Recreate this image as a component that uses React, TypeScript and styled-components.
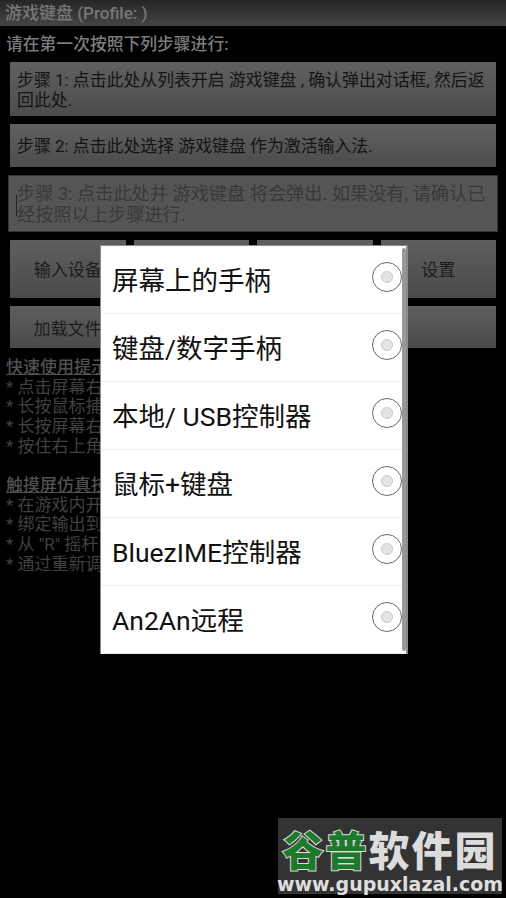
import React from 'react'
import styled, { createGlobalStyle } from 'styled-components'

const cjk = `Roboto, "Noto Sans CJK SC", sans-serif`

const inputOptions = ['屏幕上的手柄', '键盘/数字手柄', '本地/ USB控制器', '鼠标+键盘', 'BluezIME控制器', 'An2An远程']

const quickTips = ['* 点击屏幕右', '* 长按鼠标捕', '* 长按屏幕右', '* 按住右上角']
const touchTips = ['* 在游戏内开', '* 绑定输出到', '* 从 "R" 摇杆', '* 通过重新调']

function App() {
  return (
    <Screen>
      <GlobalStyle />
      <TitleBar>游戏键盘 (Profile: )</TitleBar>
      <Content>
        <Intro>请在第一次按照下列步骤进行:</Intro>
        <StepButton>步骤 1: 点击此处从列表开启 游戏键盘 , 确认弹出对话框, 然后返回此处.</StepButton>
        <StepButton $center>步骤 2: 点击此处选择 游戏键盘 作为激活输入法.</StepButton>
        <DisabledStep>
          <Caret />
          步骤 3: 点击此处并 游戏键盘 将会弹出. 如果没有, 请确认已经按照以上步骤进行.
        </DisabledStep>
        <ActionRow>
          <ActionButton>输入设备</ActionButton>
          <ActionButton />
          <ActionButton />
          <ActionButton>设置</ActionButton>
        </ActionRow>
        <LoadRow>
          <LoadButton>加载文件</LoadButton>
          <LoadButton />
        </LoadRow>
        <Tips>
          <TipsHeading>快速使用提示</TipsHeading>
          {quickTips.map((tip) => (
            <TipLine key={tip}>{tip}</TipLine>
          ))}
          <TipsHeading $spaced>触摸屏仿真技</TipsHeading>
          {touchTips.map((tip, i) => (
            <TipLine key={tip}>
              {tip}
              {i === 0 && <TipEnd>)</TipEnd>}
            </TipLine>
          ))}
        </Tips>
      </Content>

      <Dialog>
        {inputOptions.map((option) => (
          <Option key={option}>
            <OptionLabel>{option}</OptionLabel>
            <Radio>
              <RadioDot />
            </Radio>
          </Option>
        ))}
        <Scrollbar />
      </Dialog>

      <Watermark>
        <LogoTitle>
          <LogoGreen>谷普</LogoGreen>
          <LogoWhite>软件园</LogoWhite>
        </LogoTitle>
        <LogoUrl>www.gupuxlazal.com</LogoUrl>
      </Watermark>
    </Screen>
  )
}

const GlobalStyle = createGlobalStyle`
  html, body {
    margin: 0;
    padding: 0;
    background: #000;
  }
`

const Screen = styled.div`
  position: relative;
  width: 506px;
  height: 898px;
  overflow: hidden;
  background: #000;
  font-family: ${cjk};
`

const TitleBar = styled.div`
  height: 26px;
  line-height: 26px;
  padding-left: 5px;
  font-size: 17px;
  font-weight: 500;
  color: #777;
  background: linear-gradient(#262626, #454545);
`

const Content = styled.div`
  display: flex;
  flex-direction: column;
  padding: 0 10px;
`

const Intro = styled.div`
  height: 36px;
  line-height: 36px;
  margin-left: -4px;
  font-size: 16.8px;
  font-weight: 500;
  color: #7c7c7c;
`

const StepButton = styled.div<{ $center?: boolean }>`
  display: flex;
  align-items: ${({ $center }) => ($center ? 'center' : 'flex-start')};
  box-sizing: border-box;
  height: ${({ $center }) => ($center ? '43px' : '54px')};
  margin-bottom: 8px;
  padding: ${({ $center }) => ($center ? '0 7px' : '8px 7px 0')};
  font-size: 16.9px;
  line-height: 20px;
  color: #141414;
  background: linear-gradient(#606060, #4c4c4c);
`

const DisabledStep = styled.div`
  position: relative;
  box-sizing: border-box;
  height: 57px;
  margin: 0 -2px 8px;
  padding: 7px 8px 0;
  font-size: 18.2px;
  line-height: 21px;
  color: #393939;
  background: #555;
  border: 1px solid #333;
`

const Caret = styled.div`
  position: absolute;
  left: 7px;
  top: 19px;
  width: 1px;
  height: 21px;
  background: #222;
`

const ActionRow = styled.div`
  display: grid;
  grid-template-columns: repeat(4, 1fr);
  column-gap: 8px;
  height: 58px;
  margin-bottom: 8px;
`

const ActionButton = styled.div`
  display: flex;
  align-items: center;
  justify-content: center;
  padding-bottom: 2px;
  font-size: 17px;
  color: #1c1c1c;
  background: linear-gradient(#5e5e5e, #4a4a4a);
`

const LoadRow = styled.div`
  display: grid;
  grid-template-columns: 115px 1fr;
  column-gap: 8px;
  height: 42px;
`

const LoadButton = styled(ActionButton)`
  padding-bottom: 0;
`

const Tips = styled.div`
  display: flex;
  flex-direction: column;
  margin: 10px 0 0 -4px;
  font-size: 17px;
  line-height: 19.7px;
  color: #404040;
`

const TipsHeading = styled.div<{ $spaced?: boolean }>`
  margin-top: ${({ $spaced }) => ($spaced ? '19.5px' : '0')};
  font-weight: 500;
  text-decoration: underline;
  color: #505050;
`

const TipLine = styled.div`
  display: flex;
  justify-content: space-between;
  padding-right: 88px;
  white-space: nowrap;
`

const TipEnd = styled.span``

const Dialog = styled.div`
  position: absolute;
  left: 100px;
  top: 245px;
  box-sizing: border-box;
  width: 308px;
  height: 409px;
  display: flex;
  flex-direction: column;
  background: #fff;
  border: solid #8c8c8c;
  border-width: 1px 2px 1px 1px;
`

const Option = styled.div`
  display: flex;
  align-items: center;
  justify-content: space-between;
  flex: 0 0 68px;
  box-sizing: border-box;
  padding: 0 4px 0 11px;
  border-bottom: 1px solid #eee;

  &:last-of-type {
    border-bottom: none;
  }
`

const OptionLabel = styled.div`
  margin-top: -2px;
  font-size: 26.5px;
  color: #111;
  white-space: nowrap;
`

const Radio = styled.div`
  display: flex;
  align-items: center;
  justify-content: center;
  box-sizing: border-box;
  width: 30px;
  height: 30px;
  margin-bottom: 5px;
  border: 1.5px solid #6a6a6a;
  border-radius: 50%;
  background: #fff;
`

const RadioDot = styled.div`
  width: 10px;
  height: 10px;
  border-radius: 50%;
  background: #e4e4e4;
  border: 1px solid #c8c8c8;
`

const Scrollbar = styled.div`
  position: absolute;
  right: 0;
  top: 2px;
  bottom: 2px;
  width: 4px;
  border-radius: 2px;
  background: #999;
`

const Watermark = styled.div`
  position: absolute;
  left: 278px;
  top: 818px;
  box-sizing: border-box;
  width: 224px;
  height: 76px;
  padding-top: 5px;
  display: flex;
  flex-direction: column;
  align-items: center;
  background: #333;
`

const LogoTitle = styled.div`
  display: flex;
  height: 51px;
  align-items: center;
  font-size: 41px;
  font-weight: 900;
  line-height: 51px;
  letter-spacing: 2px;
  font-family: "Noto Sans CJK SC", sans-serif;
`

const LogoGreen = styled.span`
  color: #1d7a2a;
  -webkit-text-stroke: 2px #dcdcdc;
  paint-order: stroke fill;
`

const LogoWhite = styled.span`
  color: #dcdcdc;
`

const LogoUrl = styled.div`
  font-family: "DejaVu Sans", sans-serif;
  font-size: 19px;
  font-weight: 700;
  line-height: 20px;
  color: #dedede;
  white-space: nowrap;
`

export default App
